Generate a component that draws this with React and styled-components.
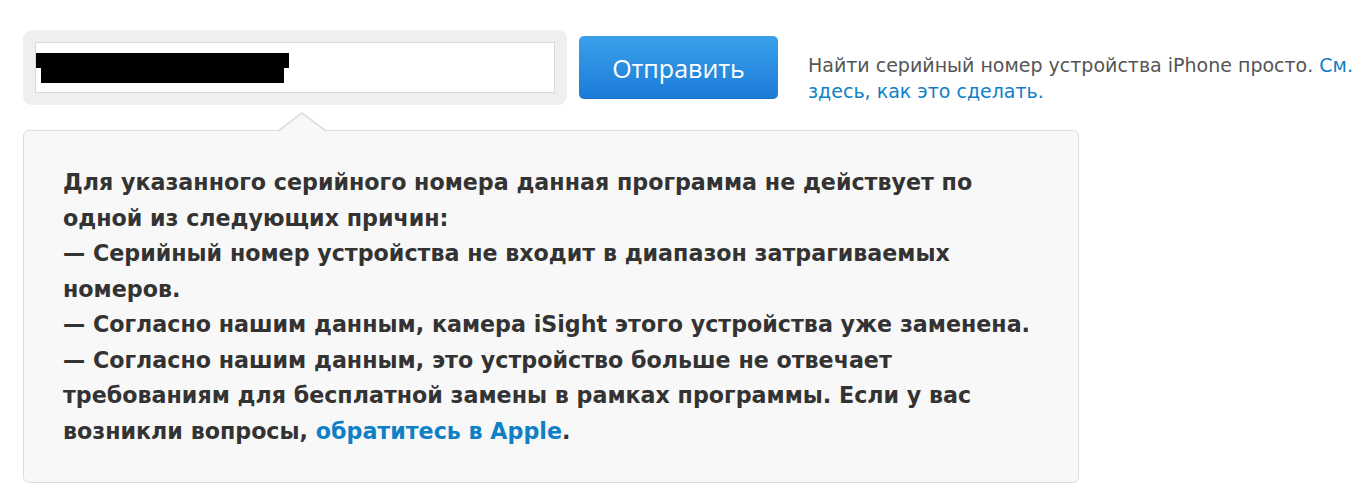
import React from 'react';
import styled, { createGlobalStyle } from 'styled-components';

const GlobalStyle = createGlobalStyle`
  html, body {
    margin: 0;
    padding: 0;
    background: #ffffff;
  }
  body {
    font-family: 'DejaVu Sans', 'Liberation Sans', sans-serif;
  }
`;

const App = () => {
  return (
    <Page>
      <GlobalStyle />
      <TopRow>
        <InputShell>
          <SerialInput>
            <Redaction>
              <RedactBar $width={253} $shift={0} />
              <RedactBar $width={243} $shift={5} />
            </Redaction>
          </SerialInput>
        </InputShell>
        <SubmitButton type="button">Отправить</SubmitButton>
        <HelpText>
          Найти серийный номер устройства iPhone просто.{' '}
          <Link href="#">См. здесь, как это сделать.</Link>
        </HelpText>
      </TopRow>
      <Callout>
        <Message>
          Для указанного серийного номера данная программа не действует по одной из следующих причин:
          <br />— Серийный номер устройства не входит в диапазон затрагиваемых номеров.
          <br />— Согласно нашим данным, камера iSight этого устройства уже заменена.
          <br />— Согласно нашим данным, это устройство больше не отвечает требованиям для бесплатной замены в рамках программы. Если у вас возникли вопросы,{' '}
          <Link href="#">обратитесь в Apple</Link>.
        </Message>
      </Callout>
    </Page>
  );
};

const Page = styled.div`
  padding: 30px 0 0 23px;
`;

const TopRow = styled.div`
  display: flex;
  align-items: center;
`;

const InputShell = styled.div`
  width: 520px;
  padding: 12px;
  background-color: #efefef;
  border-radius: 9px;
`;

const SerialInput = styled.div`
  height: 49px;
  background-color: #ffffff;
  border: 1px solid #d9d9d9;
  display: flex;
  align-items: center;
`;

const Redaction = styled.div`
  display: flex;
  flex-direction: column;
  margin-top: 1px;
`;

const RedactBar = styled.div`
  width: ${(p) => p.$width}px;
  height: 15px;
  margin-left: ${(p) => p.$shift}px;
  background-color: #000000;
`;

const SubmitButton = styled.button`
  width: 199px;
  height: 63px;
  margin-left: 12px;
  border: none;
  border-radius: 5px;
  background: linear-gradient(to bottom, #3aa0ea 0%, #1b7bd8 100%);
  box-shadow: inset 0 -1px 0 rgba(0, 0, 0, 0.08);
  color: #ffffff;
  font-family: 'Open Sans', 'Liberation Sans', sans-serif;
  font-size: 25px;
  font-weight: 500;
  cursor: pointer;
`;

const HelpText = styled.p`
  align-self: flex-start;
  width: 552px;
  margin: 22px 0 0 30px;
  font-size: 19px;
  line-height: 26px;
  color: #555555;
`;

const Link = styled.a`
  color: #0f7fc6;
  text-decoration: none;
`;

const Callout = styled.div`
  position: relative;
  box-sizing: border-box;
  width: 1056px;
  margin-top: 25px;
  padding: 34px 40px 33px 39px;
  background-color: #f8f8f8;
  border: 1px solid #dcdcdc;
  border-radius: 6px;

  &::before,
  &::after {
    content: '';
    position: absolute;
    left: 254px;
    width: 0;
    height: 0;
    border-left: 24px solid transparent;
    border-right: 24px solid transparent;
  }

  &::before {
    top: -19px;
    border-bottom: 18px solid #dcdcdc;
  }

  &::after {
    top: -17px;
    border-bottom: 18px solid #f8f8f8;
  }
`;

const Message = styled.p`
  margin: 0;
  font-size: 22.2px;
  font-weight: bold;
  line-height: 35.5px;
  color: #333333;
`;

export default App;
